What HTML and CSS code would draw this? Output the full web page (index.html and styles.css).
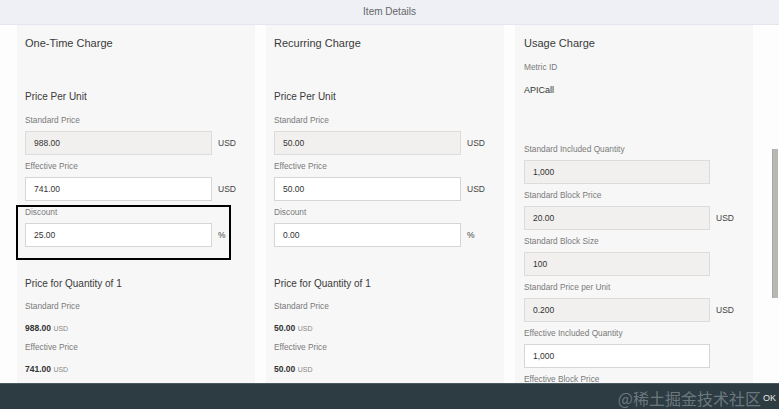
FILE: index.html
```html
<!DOCTYPE html>
<html>
<head>
<meta charset="utf-8">
<link rel="stylesheet" href="styles.css">
</head>
<body>
<div class="dialog">
  <header class="header">Item Details</header>
  <main class="content">
    <section class="col">
      <h2 class="col-title">One-Time Charge</h2>
      <h3 class="sub-title first">Price Per Unit</h3>
      <div class="field">
        <div class="label">Standard Price</div>
        <div class="row"><div class="input readonly">988.00</div><span class="unit">USD</span></div>
      </div>
      <div class="field">
        <div class="label">Effective Price</div>
        <div class="row"><div class="input">741.00</div><span class="unit">USD</span></div>
      </div>
      <div class="field marked">
        <div class="label">Discount</div>
        <div class="row"><div class="input">25.00</div><span class="unit">%</span></div>
        <div class="highlight"></div>
      </div>
      <h3 class="sub-title second">Price for Quantity of 1</h3>
      <div class="label plain">Standard Price</div>
      <div class="value"><b>988.00</b> <span>USD</span></div>
      <div class="label plain">Effective Price</div>
      <div class="value"><b>741.00</b> <span>USD</span></div>
    </section>
    <section class="col">
      <h2 class="col-title">Recurring Charge</h2>
      <h3 class="sub-title first">Price Per Unit</h3>
      <div class="field">
        <div class="label">Standard Price</div>
        <div class="row"><div class="input readonly">50.00</div><span class="unit">USD</span></div>
      </div>
      <div class="field">
        <div class="label">Effective Price</div>
        <div class="row"><div class="input">50.00</div><span class="unit">USD</span></div>
      </div>
      <div class="field">
        <div class="label">Discount</div>
        <div class="row"><div class="input">0.00</div><span class="unit">%</span></div>
      </div>
      <h3 class="sub-title second">Price for Quantity of 1</h3>
      <div class="label plain">Standard Price</div>
      <div class="value"><b>50.00</b> <span>USD</span></div>
      <div class="label plain">Effective Price</div>
      <div class="value"><b>50.00</b> <span>USD</span></div>
    </section>
    <section class="col">
      <h2 class="col-title">Usage Charge</h2>
      <div class="label metric">Metric ID</div>
      <div class="text-value">APICall</div>
      <div class="field">
        <div class="label">Standard Included Quantity</div>
        <div class="row"><div class="input readonly">1,000</div></div>
      </div>
      <div class="field">
        <div class="label">Standard Block Price</div>
        <div class="row"><div class="input readonly">20.00</div><span class="unit">USD</span></div>
      </div>
      <div class="field">
        <div class="label">Standard Block Size</div>
        <div class="row"><div class="input readonly">100</div></div>
      </div>
      <div class="field">
        <div class="label">Standard Price per Unit</div>
        <div class="row"><div class="input readonly">0.200</div><span class="unit">USD</span></div>
      </div>
      <div class="field">
        <div class="label">Effective Included Quantity</div>
        <div class="row"><div class="input">1,000</div></div>
      </div>
      <div class="field">
        <div class="label">Effective Block Price</div>
      </div>
    </section>
    <div class="scroll-thumb"></div>
  </main>
  <footer class="footer">
    <span class="watermark">@稀土掘金技术社区</span>
    <span class="ok">OK</span>
  </footer>
</div>
</body>
</html>
```
FILE: styles.css
```css
* { box-sizing: border-box; }
html, body { margin: 0; padding: 0; background: #fdfdfd; }
body {
  width: 779px;
  height: 412px;
  overflow: hidden;
  font-family: "Liberation Sans", Arial, "Noto Sans CJK SC", sans-serif;
  color: #333;
}
.dialog {
  display: flex;
  flex-direction: column;
  height: 412px;
}
.header {
  height: 25px;
  flex: 0 0 25px;
  background: #eef0f5;
  border-bottom: 1px solid #e3e6ec;
  color: #666;
  font-size: 10px;
  line-height: 23px;
  text-align: center;
}
.content {
  position: relative;
  flex: 1;
  overflow: hidden;
  display: grid;
  grid-template-columns: 238px 238px 238px;
  column-gap: 11px;
  padding-left: 17px;
  background: #fdfdfd;
}
.col {
  background: #f7f7f7;
  padding: 11px 0 0 8px;
}
.col:nth-child(3) { padding-left: 9px; }
.col-title {
  margin: 0;
  font-size: 11px;
  line-height: 14px;
  font-weight: normal;
  color: #3a3a3a;
}
.sub-title {
  margin: 0;
  font-size: 10px;
  line-height: 13px;
  font-weight: normal;
  color: #3a3a3a;
}
.sub-title.first { margin-top: 40px; margin-bottom: 12px; }
.sub-title.second { margin-top: 30px; margin-bottom: 11px; }
.label {
  font-size: 8.3px;
  line-height: 11px;
  color: #7a7a7a;
  margin-bottom: 5px;
}
.field {
  margin-bottom: 6px;
}
.field.marked { position: relative; }
.row {
  display: flex;
  align-items: center;
  gap: 6px;
}
.input {
  width: 187px;
  height: 24px;
  border: 1px solid #d6d6d6;
  background: #fff;
  padding-left: 8px;
  font-size: 8.5px;
  line-height: 22px;
  color: #333;
}
.input.readonly {
  background: #f1f0ef;
  border-color: #dedcda;
}
.col:nth-child(3) .input { width: 186px; }
.unit {
  font-size: 8.5px;
  color: #444;
}
.highlight {
  position: absolute;
  top: -2px;
  left: -9px;
  width: 215px;
  height: 55px;
  border: 2.5px solid #000;
}
.label.plain { margin-bottom: 11px; }
.value {
  font-size: 8.5px;
  line-height: 11px;
  margin-bottom: 8px;
}
.value b { color: #333; }
.value span { font-size: 7px; color: #888; }
.label.metric { margin-top: 12px; margin-bottom: 11px; }
.text-value {
  font-size: 9px;
  line-height: 12px;
  color: #333;
  margin-bottom: 48px;
}
.scroll-thumb {
  position: absolute;
  right: 1px;
  top: 124px;
  width: 6px;
  height: 149px;
  background: #b7b7b3;
  border-left: 1px solid #a8a8a4;
}
.footer {
  position: relative;
  height: 26px;
  flex: 0 0 26px;
  margin-bottom: 3px;
  background: #2d3b42;
  border-top: 1px solid #4a5a62;
  display: flex;
  align-items: center;
  justify-content: flex-end;
  padding-right: 3px;
}
.watermark {
  position: absolute;
  right: 18px;
  top: 3px;
  font-family: "Noto Sans CJK SC", sans-serif;
  font-size: 16px;
  line-height: 22px;
  color: rgba(190, 198, 202, 0.45);
  white-space: nowrap;
}
.ok {
  position: relative;
  font-size: 9px;
  color: #e6e6e6;
  margin-top: 3px;
}
```
